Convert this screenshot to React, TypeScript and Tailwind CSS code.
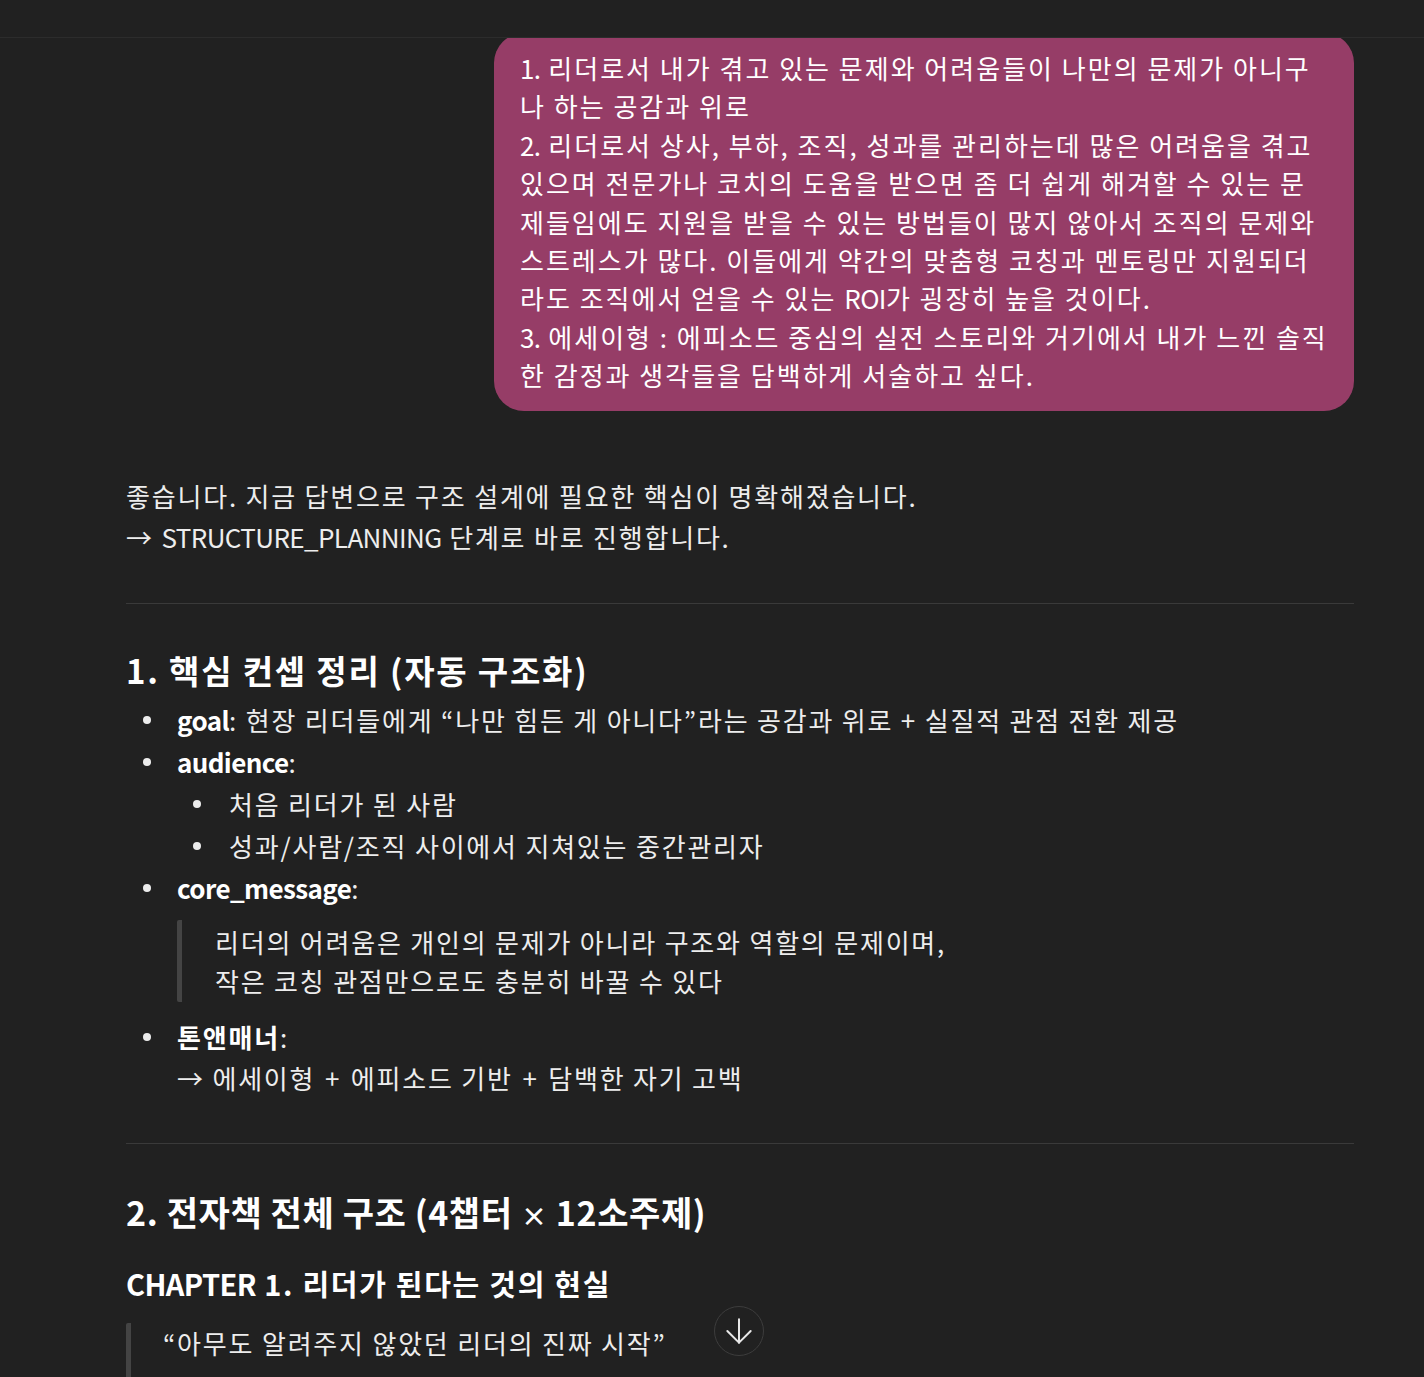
import { ArrowDown } from 'lucide-react'

const font = { fontFamily: '"Noto Sans CJK KR", "Noto Sans", sans-serif' }

function Dot() {
  return <span className="block w-[8px] h-[8px] rounded-full bg-[#ececec]" />
}

// latin runs keep near-normal spacing; hangul gets the extra tracking
function L({ children }: { children: React.ReactNode }) {
  return <span className="tracking-[-0.6px]">{children}</span>
}

function Plus() {
  return <span className="px-[2px]">+</span>
}

function Item({ children, nested = false }: { children: React.ReactNode; nested?: boolean }) {
  return (
    <li className="flex">
      <span className={`flex h-[42px] shrink-0 items-center ${nested ? 'w-[52px] pl-[16px]' : 'w-[51px] pl-[17px]'}`}>
        <Dot />
      </span>
      <div className="min-w-0 flex-1">{children}</div>
    </li>
  )
}

export default function App() {
  return (
    <div
      className="relative flex h-[1377px] flex-col overflow-hidden bg-[#212121] text-[#ededed]"
      style={font}
    >
      {/* top bar */}
      <div className="relative z-10 h-[38px] shrink-0 border-b border-[#2c2c2c] bg-[#212121]" />

      <main className="min-h-0 flex-1 overflow-hidden">
        <div className="ml-[126px] w-[1228px] -mt-[5px] tracking-[1.8px]">
          {/* user message */}
          <div className="flex justify-end">
            <div className="w-[860px] rounded-[30px] bg-[#963d67] pl-[26px] pr-[23px] py-[16px] text-[26px] leading-[38.4px] tracking-[2px] text-white">
              <L>1.</L> 리더로서 내가 겪고 있는 문제와 어려움들이 나만의 문제가 아니구나 하는 공감과 위로
              <br />
              <L>2.</L> 리더로서 상사, 부하, 조직, 성과를 관리하는데 많은 어려움을 겪고 있으며 전문가나 코치의 도움을 받으면 좀 더 쉽게 해겨할 수 있는 문제들임에도 지원을 받을 수 있는 방법들이 많지 않아서 조직의 문제와 스트레스가 많다. 이들에게 약간의 맞춤형 코칭과 멘토링만 지원되더라도 조직에서 얻을 수 있는 <L>ROI</L>가 굉장히 높을 것이다.
              <br />
              <L>3.</L> 에세이형 : 에피소드 중심의 실전 스토리와 거기에서 내가 느낀 솔직한 감정과 생각들을 담백하게 서술하고 싶다.
            </div>
          </div>

          {/* assistant reply */}
          <div className="mt-[64px] text-[26px] leading-[41px]">
            <p>
              좋습니다. 지금 답변으로 구조 설계에 필요한 핵심이 명확해졌습니다.
              <br />→ <L>STRUCTURE_PLANNING</L> 단계로 바로 진행합니다.
            </p>

            <hr className="mt-[46px] border-0 border-t border-[#3a3a3a]" />

            <h3 className="mt-[44px] text-[33px] font-bold leading-[44px] text-white">1. 핵심 컨셉 정리 (자동 구조화)</h3>

            <ul className="mt-[7px] leading-[42px]">
              <Item>
                <strong className="font-bold text-white"><L>goal</L></strong>: 현장 리더들에게 “나만 힘든 게 아니다”라는 공감과 위로 + 실질적 관점 전환 제공
              </Item>
              <Item>
                <strong className="font-bold text-white"><L>audience</L></strong>:
                <ul>
                  <Item nested>처음 리더가 된 사람</Item>
                  <Item nested>성과/사람/조직 사이에서 지쳐있는 중간관리자</Item>
                </ul>
              </Item>
              <Item>
                <strong className="font-bold text-white"><L>core_message</L></strong>:
                <blockquote className="mt-[11px] border-l-[5px] border-[#444444] rounded-[2px] py-[2px] pl-[33px] leading-[39px]">
                  리더의 어려움은 개인의 문제가 아니라 구조와 역할의 문제이며,
                  <br />
                  작은 코칭 관점만으로도 충분히 바꿀 수 있다
                </blockquote>
              </Item>
              <li className="mt-[14px] flex">
                <span className="flex h-[42px] w-[51px] shrink-0 items-center pl-[17px]">
                  <Dot />
                </span>
                <div className="leading-[41px]">
                  <strong className="font-bold text-white">톤앤매너</strong>:
                  <br />→ 에세이형 <Plus /> 에피소드 기반 <Plus /> 담백한 자기 고백
                </div>
              </li>
            </ul>

            <hr className="mt-[45px] border-0 border-t border-[#3a3a3a]" />

            <h2 className="mt-[44px] text-[34px] font-bold leading-[48px] tracking-[0.6px] text-white">
              2. 전자책 전체 구조 (4챕터 <span className="text-[26px]">×</span> 12소주제)
            </h2>

            <h4 className="mt-[24px] text-[29px] font-bold leading-[40px] tracking-[1.7px] text-white">
              <L>CHAPTER</L> 1. 리더가 된다는 것의 현실
            </h4>

            <blockquote className="mt-[20px] border-l-[5px] border-[#444444] rounded-[2px] pl-[32px] leading-[39px] pb-[20px]">
              “아무도 알려주지 않았던 리더의 진짜 시작”
            </blockquote>
          </div>
        </div>
      </main>

      {/* scroll to bottom */}
      <button className="absolute bottom-[21px] left-[714px] flex h-[50px] w-[50px] items-center justify-center rounded-full border border-[#3d3d3d] bg-[#212121] text-[#e8e8e8]">
        <ArrowDown size={40} strokeWidth={1.2} />
      </button>
    </div>
  )
}
